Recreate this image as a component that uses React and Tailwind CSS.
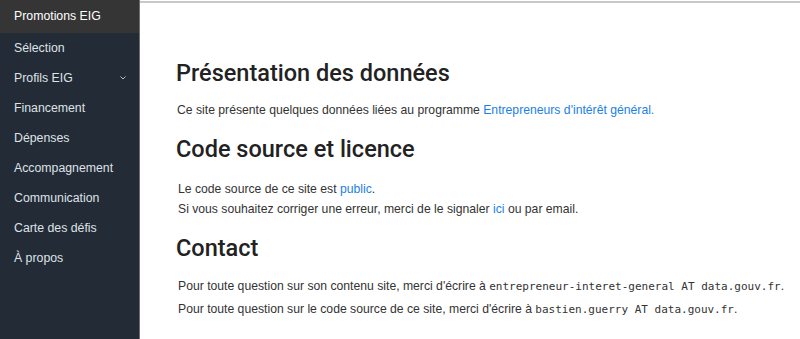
import React from 'react';

const items = [
  'Promotions EIG',
  'Sélection',
  'Profils EIG',
  'Financement',
  'Dépenses',
  'Accompagnement',
  'Communication',
  'Carte des défis',
  'À propos',
];

function Sidebar() {
  return (
    <aside className="w-[140px] shrink-0 bg-[#222b36] border-r border-[#6e6e6e] min-h-[339px]">
      {items.map((label, i) => (
        <div
          key={label}
          className={
            'flex items-center justify-between h-[30px] pl-[14px] pr-[14px] text-[12.3px] ' +
            (i === 0 ? 'bg-[#353535] h-[33px] text-white' : 'text-[#dfe2e6]')
          }
        >
          <span>{label}</span>
          {label === 'Profils EIG' && (
            <svg width="6" height="4" viewBox="0 0 6 4" className="-mr-[1px]">
              <path d="M0.5 0.5 L3 3 L5.5 0.5" fill="none" stroke="#b8bec6" strokeWidth="1" />
            </svg>
          )}
        </div>
      ))}
    </aside>
  );
}

function Link({ children }) {
  return <span className="text-[#1a7fe8]">{children}</span>;
}

function Mono({ children }) {
  return <span className="font-['DejaVu_Sans_Mono',monospace] text-[11px]">{children}</span>;
}

function Heading({ children, className = '' }) {
  return (
    <h2 className={"font-['Roboto',sans-serif] text-[23.5px] leading-[32px] font-medium text-[#222] " + className}>
      {children}
    </h2>
  );
}

export default function App() {
  return (
    <div className="flex w-[800px] h-[339px] overflow-hidden bg-white font-['Liberation_Sans',sans-serif]">
      <Sidebar />
      <main className="flex-1 border-t-2 border-[#c8c8c8] mt-[1px] pl-[36px] pt-[54px] text-[#333]">
        <Heading>Présentation des données</Heading>
        <p className="mt-[11px] pl-[1px] text-[12.2px] leading-[20px]">
          Ce site présente quelques données liées au programme <Link>Entrepreneurs d'intérêt général.</Link>
        </p>
        <Heading className="mt-[13px]">Code source et licence</Heading>
        <div className="mt-[14px] pl-[2px] text-[12.2px] leading-[20px]">
          <p>Le code source de ce site est <Link>public</Link>.</p>
          <p>Si vous souhaitez corriger une erreur, merci de le signaler <Link>ici</Link> ou par email.</p>
        </div>
        <Heading className="mt-[13px]">Contact</Heading>
        <div className="mt-[11px] pl-[2px] text-[12.2px] leading-[22px]">
          <p>Pour toute question sur son contenu site, merci d'écrire à <Mono>entrepreneur-interet-general AT data.gouv.fr</Mono>.</p>
          <p>Pour toute question sur le code source de ce site, merci d'écrire à <Mono>bastien.guerry AT data.gouv.fr</Mono>.</p>
        </div>
      </main>
    </div>
  );
}
